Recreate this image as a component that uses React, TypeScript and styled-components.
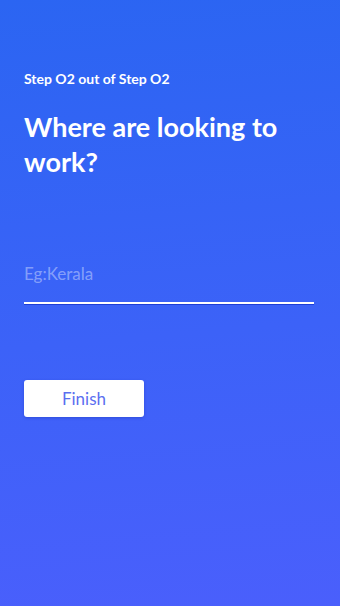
import styled, { createGlobalStyle } from 'styled-components';

const GlobalStyle = createGlobalStyle`
  html, body {
    margin: 0;
    padding: 0;
  }
  body {
    font-family: Lato, "Open Sans", sans-serif;
  }
  input::placeholder {
    color: rgba(255, 255, 255, 0.4);
  }
`;

export default function App() {
  return (
    <>
      <GlobalStyle />
      <Screen>
        <StepLabel>Step O2 out of Step O2</StepLabel>
        <Title>Where are looking to work?</Title>
        <Field placeholder="Eg:Kerala" />
        <FinishButton type="button">Finish</FinishButton>
      </Screen>
    </>
  );
}

const Screen = styled.main`
  box-sizing: border-box;
  width: 340px;
  height: 606px;
  padding: 70px 26px 0 24px;
  display: flex;
  flex-direction: column;
  align-items: flex-start;
  background: linear-gradient(175deg, #2b65f2 0%, #3c62f8 55%, #4a5ffc 100%);
`;

const StepLabel = styled.div`
  font-size: 14px;
  font-weight: 700;
  color: #ffffff;
`;

const Title = styled.h1`
  margin: 22px 0 0;
  font-size: 27px;
  font-weight: 700;
  line-height: 35px;
  color: #ffffff;
  max-width: 270px;
`;

const Field = styled.input`
  box-sizing: border-box;
  width: 100%;
  margin-top: 84px;
  padding: 0 0 18px;
  border: none;
  border-bottom: 2px solid #ffffff;
  box-shadow: 0 1px 0 #1d3fd6;
  background: transparent;
  font-family: inherit;
  font-size: 17px;
  color: #ffffff;
  outline: none;
`;

const FinishButton = styled.button`
  margin-top: 76px;
  width: 120px;
  height: 37px;
  border: none;
  border-radius: 3px;
  background: #ffffff;
  box-shadow: 0 1px 3px rgba(20, 40, 160, 0.35);
  font-family: inherit;
  font-size: 17px;
  color: #5b6ff0;
  cursor: pointer;
`;
